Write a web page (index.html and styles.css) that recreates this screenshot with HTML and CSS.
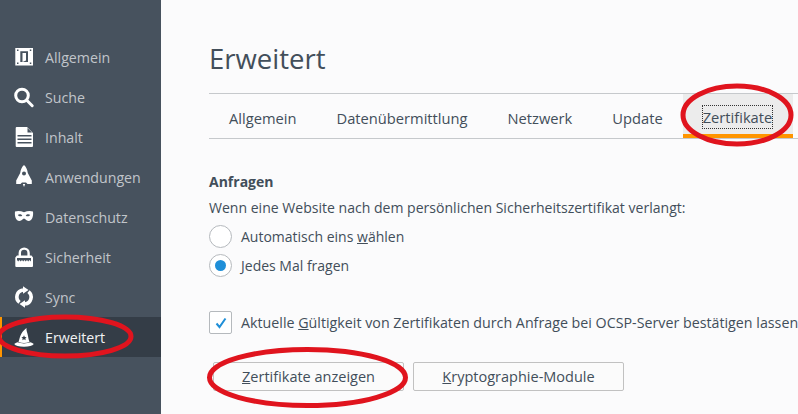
FILE: index.html
```html
<!DOCTYPE html>
<html lang="de">
<head>
  <meta charset="UTF-8">
  <title>Erweitert</title>
  <link rel="stylesheet" href="styles.css">
</head>
<body>
  <nav class="sidebar">
    <a class="nav-item">
      <svg class="nav-icon" viewBox="0 0 20 20"><path fill="#fff" fill-rule="evenodd" d="M1.300 1H19v17.500H1.300zM6.300 4.300V15H14V4.300zM3 2.500v1.500h1.500V2.500zM15.800 2.500v1.500h1.500V2.500zM3 15.500V17h1.500v-1.500zM15.800 15.500V17h1.500v-1.500z"/><path fill="#fff" d="M8.500 6H12v7.500l-3.500 1.500z"/></svg>
      Allgemein
    </a>
    <a class="nav-item">
      <svg class="nav-icon" viewBox="0 0 20 20"><circle cx="8" cy="8.500" r="6.300" fill="none" stroke="#fff" stroke-width="3"/><path d="M13 13.500l5.200 5.200" stroke="#fff" stroke-width="3" stroke-linecap="round"/></svg>
      Suche
    </a>
    <a class="nav-item">
      <svg class="nav-icon" viewBox="0 0 20 20"><path fill="#fff" fill-rule="evenodd" d="M2.700 0H13l6 6v13a1 1 0 0 1-1 1H2.700a1 1 0 0 1-1-1V1a1 1 0 0 1 1-1zM3.500 8v1.500h14V8zm0 3.500V13h14v-1.500zm0 3.500v1.500h14V15z"/><path fill="#47525e" d="M13.500 1l4.500 4.500h-4.500z"/></svg>
      Inhalt
    </a>
    <a class="nav-item">
      <svg class="nav-icon" viewBox="0 0 20 20"><path fill="#fff" fill-rule="evenodd" d="M10-2c2.200 2 3.300 4.500 3.800 8l4 7.500V17h-4.300l-1.500-1.500H8L6.500 17H2.200v-3.500l4-7.500C6.700 2.500 7.800 0 10-2zm0 6.500a2 2 0 1 0 0 4 2 2 0 0 0 0-4z"/><path fill="#fff" d="M8.800 17h2.400L10 20z"/></svg>
      Anwendungen
    </a>
    <a class="nav-item">
      <svg class="nav-icon" viewBox="0 0 20 20"><path fill="#fff" fill-rule="evenodd" d="M1 4.500c3-1 6-.5 9 .8 3-1.300 6-1.800 9-.8 .5 4-.5 9.500-4.500 9.500-2.500 0-3-2.500-4.500-2.500S8 14 5.500 14C1.500 14 .5 8.500 1 4.500zM3.800 8c1 1.600 3.500 1.600 4.500.4C7.200 7 4.800 6.800 3.800 8zm7.900.4c1 1.200 3.500 1.200 4.500-.4-1-1.200-3.400-1-4.500.4z"/></svg>
      Datenschutz
    </a>
    <a class="nav-item">
      <svg class="nav-icon" viewBox="0 0 20 20"><path fill="none" stroke="#fff" stroke-width="2.400" d="M5.800 9V6a4.400 4.400 0 0 1 8.800 0v3"/><path fill="#fff" fill-rule="evenodd" d="M3 8.500h14.500l1.500 2V19a1 1 0 0 1-1 1H2.300a1 1 0 0 1-1-1v-8.500zM3 11v2l1.200 1.500L5.500 13l1.200 1.500L8 13l1.200 1.500L10.500 13l1.200 1.500L13 13l1.200 1.500L15.500 13l1.500 1.500V11z"/></svg>
      Sicherheit
    </a>
    <a class="nav-item">
      <svg class="nav-icon" viewBox="0 0 20 20"><path fill="none" stroke="#fff" stroke-width="3.600" d="M5.500 15.400A7 7 0 0 1 9 3M14.500 4.600A7 7 0 0 1 11 17"/><path fill="#fff" d="M14.500 3L9 -.7v7.400zM5.500 17L11 13.300v7.400z"/></svg>
      Sync
    </a>
    <a class="nav-item nav-active">
      <svg class="nav-icon" viewBox="0 0 20 20"><path fill="#fff" fill-rule="evenodd" d="M12.500 1c-.5 2 1 5 1.500 8 .3 2 .7 4 1.500 6-3.500 1.300-7.500 1.300-11 0C5.500 12 6 9 7.500 6.500 9 4 10.500 2.500 12.500 1zM10 8.300l-.8 1.700-1.800.2 1.300 1.200-.4 1.800 1.700-.9 1.700.9-.4-1.800 1.300-1.200-1.800-.2z"/><path fill="#fff" d="M3.500 15.300c4 1.500 9 1.500 13 0 1.200.4 2.300 1 3.300 1.700-1.500 1.800-4.500 2.800-9.800 2.800S1.700 18.800.2 17c1-.7 2.100-1.300 3.300-1.700z"/></svg>
      Erweitert
    </a>
  </nav>

  <main class="content">
    <h1 class="page-title">Erweitert</h1>
    <div class="tabs">
      <span class="tab">Allgemein</span>
      <span class="tab">Datenübermittlung</span>
      <span class="tab">Netzwerk</span>
      <span class="tab">Update</span>
      <span class="tab tab-selected"><span class="tab-focus">Zertifikate</span></span>
    </div>

    <section class="requests">
      <h2 class="section-title">Anfragen</h2>
      <p class="section-text">Wenn eine Website nach dem persönlichen Sicherheitszertifikat verlangt:</p>
      <label class="choice"><span class="radio"></span><span>Automatisch eins <u>w</u>ählen</span></label>
      <label class="choice"><span class="radio radio-on"></span><span><u>J</u>edes Mal fragen</span></label>
    </section>

    <label class="check-row">
      <span class="checkbox">
        <svg viewBox="0 0 14 14" width="14" height="14"><path d="M2.500 7.500l3 3.500 6-8.500" fill="none" stroke="#1f8fd8" stroke-width="2"/></svg>
      </span>
      <span class="check-text">Aktuelle <u>G</u>ültigkeit von Zertifikaten durch Anfrage bei OCSP-Server bestätigen lassen</span>
    </label>

    <div class="buttons">
      <button class="btn btn-first"><u>Z</u>ertifikate anzeigen</button>
      <button class="btn btn-second"><u>K</u>ryptographie-Module</button>
    </div>
  </main>

  <svg class="marks" width="798" height="414" viewBox="0 0 798 414">
    <g fill="none" stroke="#e0141e" stroke-width="5">
      <ellipse cx="65" cy="336.500" rx="66" ry="19.500"/>
      <ellipse cx="737" cy="115" rx="54" ry="29"/>
      <ellipse cx="307.500" cy="377.500" rx="98" ry="28"/>
    </g>
  </svg>
</body>
</html>
```

FILE: styles.css
```css
* { box-sizing: border-box; }
html, body { height: 100%; }
body { margin: 0; display: flex; height: 414px; overflow: hidden; position: relative; background: #fbfbfc; color: #424e5a; font-family: "Open Sans", "Noto Sans", sans-serif; font-size: 14px; }

.sidebar { width: 161px; flex: none; padding-top: 37px; background: #47525e; font-size: 14.2px; }
.nav-item { display: flex; align-items: center; height: 40px; padding-left: 14px; gap: 11px; color: #c1c5ca; }
.nav-icon { width: 20px; height: 20px; flex: none; overflow: visible; }
.nav-active { background: #343d47; color: #f2f3f4; border-left: 2px solid #ff9500; padding-left: 12px; }

.content { flex: 1; min-width: 0; padding: 36px 0 0 48px; }
.page-title { margin: 0; font-size: 27.5px; font-weight: 400; line-height: 46px; height: 57px; }

.tabs { display: flex; height: 46px; border-top: 1px solid #c6c9cc; border-bottom: 1px solid #c6c9cc; font-size: 14.7px; }
.tab { display: flex; align-items: center; padding: 3px 20px 0; white-space: nowrap; }
.tab-selected { width: 110px; flex: none; background: #ececec; border-bottom: 4px solid #ff9500; padding: 6px 20px 0; }
.tab-focus { outline: 1px dotted #333; line-height: 22px; }

.requests { margin-top: 33px; }
.section-title { margin: 0; font-size: 14px; font-weight: 700; line-height: 20px; }
.section-text { margin: 6px 0 0; line-height: 20px; font-size: 14.05px; }
.choice { display: flex; align-items: center; height: 29px; gap: 9px; }
.choice:first-of-type { margin-top: 4px; }
.radio { width: 23px; height: 23px; border-radius: 50%; border: 1px solid #b5b9bd; background: #fff; flex: none; }
.radio-on { display: flex; align-items: center; justify-content: center; }
.radio-on::after { content: ""; width: 11px; height: 11px; border-radius: 50%; background: #1f8fd8; }

.check-row { display: flex; align-items: center; margin-top: 31px; gap: 9px; white-space: nowrap; font-size: 14.25px; }
.checkbox { display: flex; align-items: center; justify-content: center; width: 23px; height: 23px; flex: none; border: 1px solid #b5b9bd; border-radius: 2px; background: #fff; }

.buttons { display: flex; gap: 9px; margin-top: 28px; margin-left: 4px; }
.btn { height: 29px; border: 1px solid #c1c1c1; border-radius: 2px; background: #fbfbfb; color: #424e5a; font: inherit; font-size: 14.5px; padding: 0; }
.btn-first { width: 191px; }
.btn-second { width: 211px; }

.marks { position: absolute; left: 0; top: 0; pointer-events: none; }
```
